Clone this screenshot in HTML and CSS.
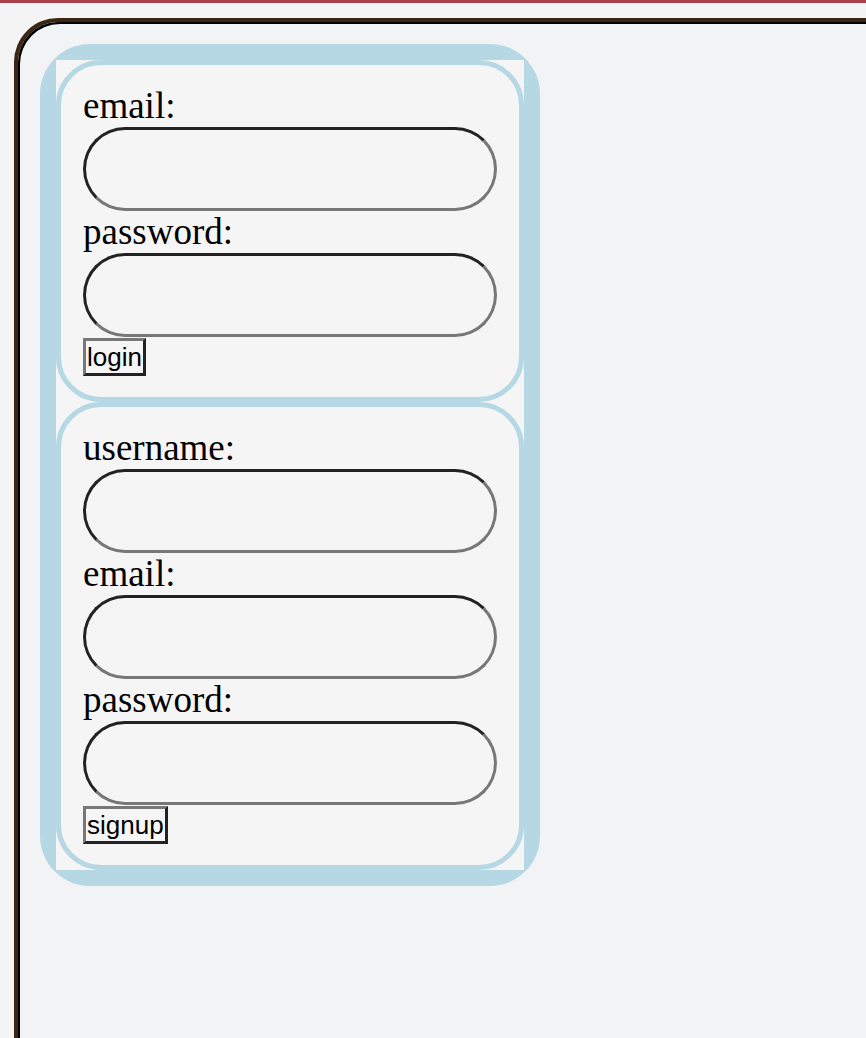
FILE: index.html
```html
<!DOCTYPE html>
<html>
<head>
<meta charset="utf-8">
<link rel="stylesheet" href="styles.css">
</head>
<body>
<div class="topbar"></div>
<div class="frame">
  <div class="panel">
    <div class="panel-inner">
      <form class="auth-form">
        <label class="field-label">email:</label>
        <input class="field-input" type="text">
        <label class="field-label">password:</label>
        <input class="field-input" type="password">
        <button class="submit-btn" type="button">login</button>
      </form>
      <form class="auth-form">
        <label class="field-label">username:</label>
        <input class="field-input" type="text">
        <label class="field-label">email:</label>
        <input class="field-input" type="text">
        <label class="field-label">password:</label>
        <input class="field-input" type="password">
        <button class="submit-btn" type="button">signup</button>
      </form>
    </div>
  </div>
</div>
</body>
</html>
```
FILE: styles.css
```css
html, body {
  margin: 0;
  padding: 0;
  overflow: hidden;
}
body {
  background: #f4f4f4;
  width: 866px;
  height: 1038px;
}
.topbar {
  height: 3px;
  background: #a8414a;
}
.frame {
  margin: 15px 0 0 14px;
  width: 852px;
  height: 1020px;
  box-sizing: border-box;
  border-top: 4px solid #3a2612;
  border-left: 4px solid #3a2612;
  border-top-left-radius: 44px;
  box-shadow: inset 2px 2px 0 0 #000;
  background: #f2f3f5;
  padding: 22px 0 0 22px;
}
.panel {
  width: 500px;
  box-sizing: border-box;
  padding: 16px;
  background: #b6d8e4;
  border-radius: 50px;
}
.panel-inner {
  background: #f5f5f5;
}
.auth-form {
  margin: 0;
  border: 5px solid #b6d8e4;
  border-radius: 45px;
  padding: 20px 21px 21px 22px;
  background: #f5f5f5;
}
.field-label {
  display: block;
  font-family: "Liberation Serif", serif;
  font-size: 37px;
  line-height: 42px;
  color: #000;
}
.field-input {
  display: block;
  box-sizing: border-box;
  width: 414px;
  height: 84px;
  margin: 0;
  padding: 0 20px;
  border: 3px solid;
  border-color: #222 #777 #777 #222;
  border-radius: 42px;
  background: #f5f5f5;
  font-size: 20px;
  outline: none;
}
.submit-btn {
  display: block;
  margin: 1px 0 0 0;
  padding: 0 1px;
  border: 3px solid;
  border-color: #777 #222 #222 #777;
  border-radius: 0;
  background: #f5f5f5;
  font-family: "Liberation Sans", Arial, sans-serif;
  font-size: 26px;
  line-height: 32px;
  color: #000;
}
```
